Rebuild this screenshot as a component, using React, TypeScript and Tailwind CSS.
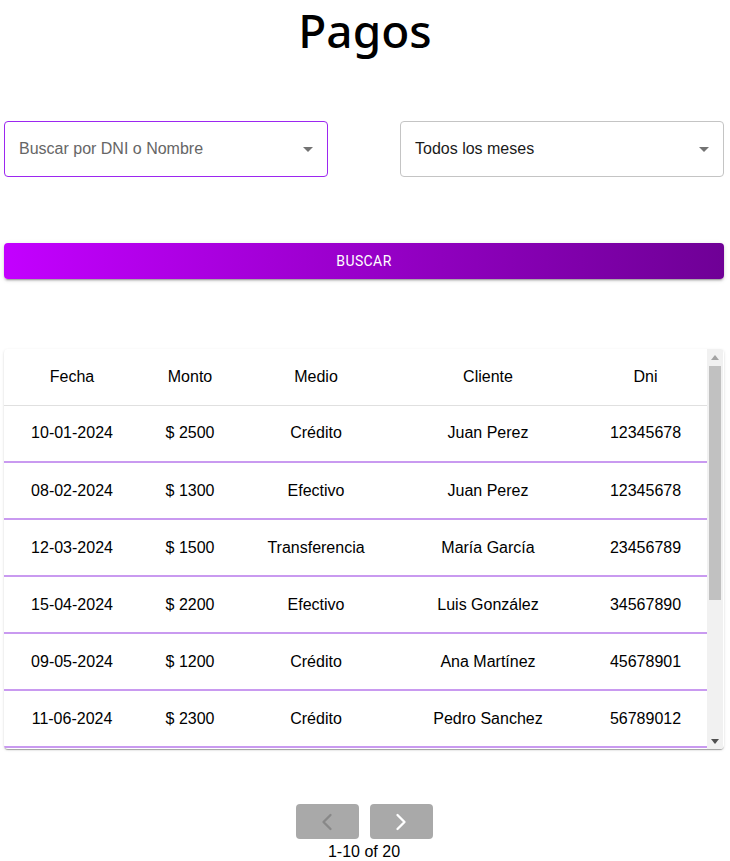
import React from "react";
import { ChevronLeft, ChevronRight } from "lucide-react";

interface Pago {
  fecha: string;
  monto: number;
  medio: string;
  cliente: string;
  dni: string;
}

const pagos: Pago[] = [
  { fecha: "10-01-2024", monto: 2500, medio: "Crédito", cliente: "Juan Perez", dni: "12345678" },
  { fecha: "08-02-2024", monto: 1300, medio: "Efectivo", cliente: "Juan Perez", dni: "12345678" },
  { fecha: "12-03-2024", monto: 1500, medio: "Transferencia", cliente: "María García", dni: "23456789" },
  { fecha: "15-04-2024", monto: 2200, medio: "Efectivo", cliente: "Luis González", dni: "34567890" },
  { fecha: "09-05-2024", monto: 1200, medio: "Crédito", cliente: "Ana Martínez", dni: "45678901" },
  { fecha: "11-06-2024", monto: 2300, medio: "Crédito", cliente: "Pedro Sanchez", dni: "56789012" },
  { fecha: "05-07-2024", monto: 1800, medio: "Efectivo", cliente: "Laura López", dni: "67890123" },
  { fecha: "14-08-2024", monto: 2100, medio: "Transferencia", cliente: "Carlos Díaz", dni: "78901234" },
  { fecha: "20-09-2024", monto: 1700, medio: "Crédito", cliente: "Sofía Romero", dni: "89012345" },
  { fecha: "03-10-2024", monto: 1900, medio: "Efectivo", cliente: "Diego Torres", dni: "90123456" },
];

const DropArrow = () => (
  <svg viewBox="0 0 24 24" className="w-6 h-6 absolute right-[7px] top-1/2 -translate-y-1/2 fill-black/55">
    <path d="M7 10l5 5 5-5z" />
  </svg>
);

const SelectBox: React.FC<{ text: string; placeholder?: boolean; focused?: boolean }> = ({
  text,
  placeholder,
  focused,
}) => (
  <div
    className={`relative w-[324px] h-[56px] rounded-[4px] border flex items-center pl-[14px] ${
      focused ? "border-[#9c27f0]" : "border-[#c4c4c4]"
    }`}
  >
    <span className={`text-[16px] ${placeholder ? "text-[#666666]" : "text-[#1a1a1a]"}`}>{text}</span>
    <DropArrow />
  </div>
);

// barra de scroll dibujada (el navegador headless no la muestra)
const ScrollBar = () => (
  <div className="w-[16px] shrink-0 bg-[#f1f1f1] flex flex-col">
    <div className="h-[16px] flex items-center justify-center">
      <svg viewBox="0 0 8 5" className="w-[8px] h-[5px] fill-[#a3a3a3]">
        <path d="M4 0L8 5H0z" />
      </svg>
    </div>
    <div className="mt-[1px] ml-[2px] w-[12px] h-[234px] bg-[#c1c1c1]" />
    <div className="flex-1" />
    <div className="h-[16px] flex items-center justify-center">
      <svg viewBox="0 0 8 5" className="w-[8px] h-[5px] fill-[#505050]">
        <path d="M0 0H8L4 5z" />
      </svg>
    </div>
  </div>
);

export default function App() {
  return (
    <div className="bg-white w-[730px] h-[861px] overflow-hidden font-['Liberation_Sans',Arial,sans-serif] text-black">
      <h1 className="text-center text-[46px] leading-[60px] font-medium font-['Noto_Sans',sans-serif]">Pagos</h1>

      <div className="pl-[4px] w-[724px]">
        {/* Filtros */}
        <div className="flex justify-between mt-[61px]">
          <SelectBox text="Buscar por DNI o Nombre" placeholder focused />
          <SelectBox text="Todos los meses" />
        </div>

        <button className="mt-[66px] w-full h-[36px] rounded-[4px] bg-gradient-to-r from-[#c300ff] to-[#6f0096] text-white text-[14px] font-['Roboto',sans-serif] tracking-[0.4px] shadow-[0_3px_1px_-2px_rgba(0,0,0,0.2),0_2px_2px_0_rgba(0,0,0,0.14),0_1px_5px_0_rgba(0,0,0,0.12)]">
          BUSCAR
        </button>

        {/* Tabla */}
        <div className="mt-[70px] h-[400px] flex bg-white rounded-[4px] overflow-hidden shadow-[0_2px_1px_-1px_rgba(0,0,0,0.2),0_1px_1px_0_rgba(0,0,0,0.14),0_1px_3px_0_rgba(0,0,0,0.12)]">
          <div className="w-[703px] overflow-hidden">
            <table className="w-[703px] table-fixed border-collapse text-[16px]">
              <colgroup>
                <col className="w-[136px]" />
                <col className="w-[100px]" />
                <col className="w-[152px]" />
                <col className="w-[192px]" />
                <col className="w-[123px]" />
              </colgroup>
              <thead>
                <tr className="h-[56px] border-b border-[#e0e0e0]">
                  {["Fecha", "Monto", "Medio", "Cliente", "Dni"].map((h) => (
                    <th key={h} className="font-normal text-center">
                      {h}
                    </th>
                  ))}
                </tr>
              </thead>
              <tbody>
                {pagos.map((p, i) => (
                  <tr key={i} className="h-[57px] border-b-2 border-[#c99af0]">
                    <td className="text-center">{p.fecha}</td>
                    <td className="text-center">$ {p.monto}</td>
                    <td className="text-center">{p.medio}</td>
                    <td className="text-center">{p.cliente}</td>
                    <td className="text-center">{p.dni}</td>
                  </tr>
                ))}
              </tbody>
            </table>
          </div>
          <ScrollBar />
        </div>

        {/* Paginación */}
        <div className="mt-[55px] flex flex-col items-center">
          <div className="flex gap-[11px]">
            <button className="w-[63px] h-[35px] rounded-[4px] bg-[#a9a9a9] flex items-center justify-center">
              <ChevronLeft className="w-7 h-7 text-[#888888]" strokeWidth={2} />
            </button>
            <button className="w-[63px] h-[35px] rounded-[4px] bg-[#a9a9a9] flex items-center justify-center">
              <ChevronRight className="w-7 h-7 text-white" strokeWidth={2} />
            </button>
          </div>
          <span className="mt-[4px] text-[16px] leading-[18px]">1-10 of 20</span>
        </div>
      </div>
    </div>
  );
}
